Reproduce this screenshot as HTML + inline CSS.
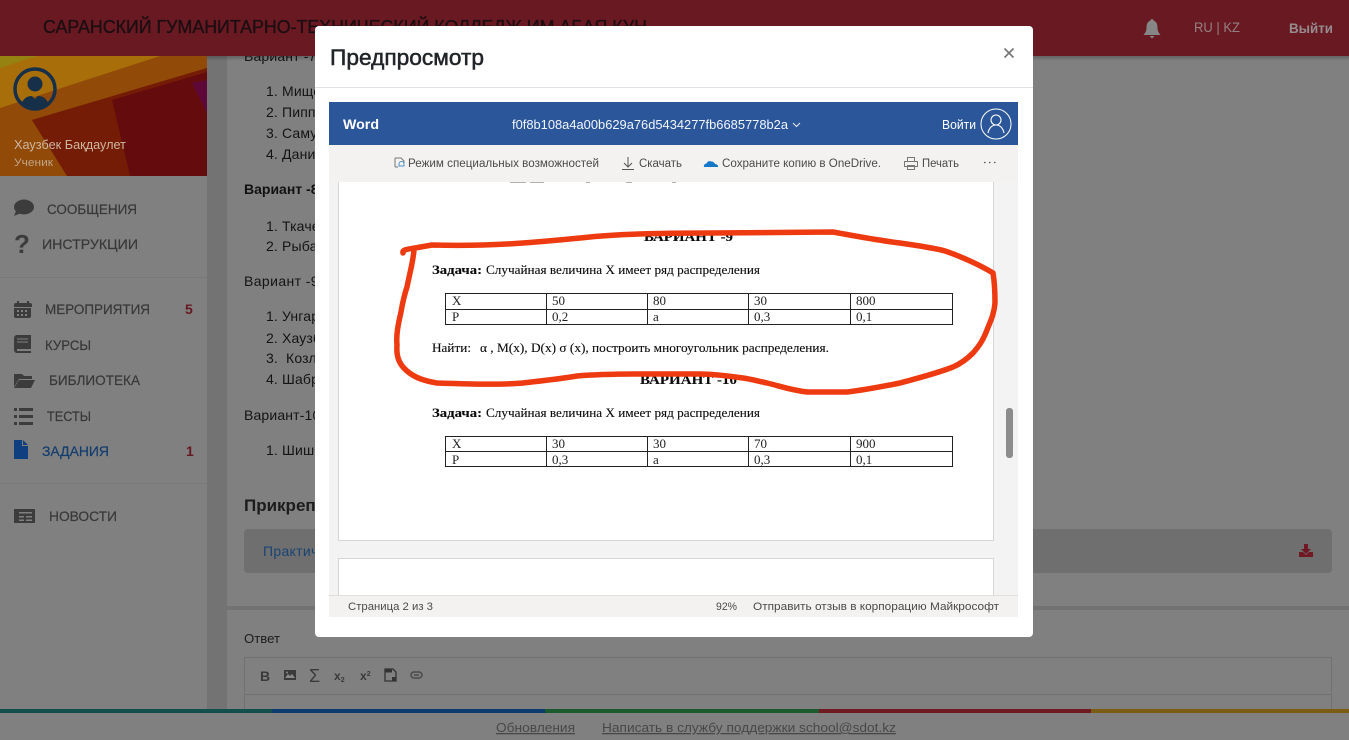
<!DOCTYPE html>
<html lang="ru"><head><meta charset="utf-8"><title>Предпросмотр</title>
<style>
html,body{margin:0;padding:0;width:1349px;height:740px;overflow:hidden;background:#808080}
svg{display:block}
text{font-family:"Liberation Sans","DejaVu Sans",sans-serif;white-space:pre}
.m{font-size:14px;fill:#383838;stroke:#383838;stroke-width:.2px}
.t{font-size:14px;fill:#141414;letter-spacing:.15px}
.w{font-size:11.500px;fill:#4a4a4a}
.d{font-family:"Liberation Serif",serif;font-size:13px;fill:#0c0c0c;stroke:#0c0c0c;stroke-width:.12px}
.c{font-family:"Liberation Serif",serif;font-size:13px;fill:#222}
.i{fill:#3c3c3c}
</style></head><body>
<svg width="1349" height="740" viewBox="0 0 1349 740" xmlns="http://www.w3.org/2000/svg">
<defs>
<linearGradient id="sh" x1="0" y1="0" x2="0" y2="1"><stop offset="0" stop-color="#000" stop-opacity=".22"/><stop offset="1" stop-color="#000" stop-opacity="0"/></linearGradient>
</defs>
<rect width="1349" height="740" fill="#808080"/>
<!-- main -->
<rect x="207" y="56" width="20" height="654" fill="#737373"/>
<rect x="227" y="606" width="1122" height="4" fill="#727272"/>
<g>
<text class="t" x="244" y="61">Вариант -7</text>
<text class="t" x="266" y="96">1. Мищенко</text>
<text class="t" x="266" y="117">2. Пиппин</text>
<text class="t" x="266" y="138">3. Самуэль</text>
<text class="t" x="266" y="159">4. Данилов</text>
<text class="t" x="244" y="194" style="font-weight:700;fill:#111;letter-spacing:0">Вариант -8</text>
<text class="t" x="266" y="231">1. Ткаченко</text>
<text class="t" x="266" y="251">2. Рыбаков</text>
<text class="t" x="244" y="286" style="letter-spacing:.4px">Вариант -9</text>
<text class="t" x="266" y="321">1. Унгаров</text>
<text class="t" x="266" y="343">2. Хаузбек</text>
<text class="t" x="266" y="363">3.  Козлов</text>
<text class="t" x="266" y="384">4. Шабров</text>
<text class="t" x="244" y="420">Вариант-10</text>
<text class="t" x="266" y="455">1. Шишкин</text>
<text x="244" y="511" style="fill:#1c1c1c;font-weight:700;font-size:17px">Прикрепленные</text>
<rect x="244" y="529" width="1088" height="44" rx="4" fill="#6f6f6f"/>
<text x="263" y="556" style="font-size:14px;fill:#1a4474;letter-spacing:.3px">Практическая</text>
<path d="M1304 544h4v5h3l-5 5-5-5h3z M1299 552h4l3 3 3-3h4v5h-14z" fill="#701824"/>
<text x="244" y="643" textLength="36" lengthAdjust="spacingAndGlyphs" style="font-size:13px;fill:#1c1c1c">Ответ</text>
<path d="M244.500 710V657.500H1331.500V710" fill="none" stroke="#717171"/>
<line x1="245" y1="694.500" x2="1331" y2="694.500" stroke="#717171"/>
<text x="260" y="681" style="font-size:14px;font-weight:700;fill:#3a3a3a">B</text>
<path d="M284 670h12v10h-12z" fill="#3a3a3a"/><path d="M285 678l3-4 2 2 2-2 3 4z" fill="#8a8a8a"/><circle cx="287" cy="672.500" r="1" fill="#8a8a8a"/>
<text x="309" y="682" style="font-size:18px;fill:#3a3a3a">Σ</text>
<text x="334" y="680" style="font-size:12px;font-weight:700;fill:#3a3a3a">x<tspan font-size="7" dy="2">2</tspan></text>
<text x="360" y="680" style="font-size:12px;font-weight:700;fill:#3a3a3a">x<tspan font-size="7" dy="-4">2</tspan></text>
<path d="M385 669h8l3 3v9h-11z" fill="none" stroke="#333" stroke-width="1.300"/><rect x="385" y="669" width="7" height="3.500" fill="#333"/><rect x="392" y="677" width="3.500" height="4" fill="#333"/>
<rect x="411" y="672" width="11" height="6" rx="3" fill="none" stroke="#4a4a4a" stroke-width="1.500"/><line x1="414" y1="675" x2="419" y2="675" stroke="#4a4a4a" stroke-width="1.500"/>
</g>
<!-- sidebar -->
<rect x="0" y="56" width="207" height="654" fill="#808080"/>
<rect x="0" y="56" width="207" height="120" fill="#7c3008"/>
<polygon points="0,56 207,56 207,68 32,120 67,176 0,176" fill="#924a08"/>
<polygon points="0,108 160,56 0,56" fill="#a86e0a"/>
<polygon points="0,68 37,56 0,56" fill="#968210"/>
<polygon points="32,120 207,68 207,176 67,176" fill="#741c06"/>
<polygon points="112,100 207,72 207,176 130,176" fill="#640c0d"/>
<polygon points="192,83 207,80 207,113" fill="#5e083a"/>
<circle cx="35" cy="89" r="20" fill="none" stroke="#16304a" stroke-width="3.500"/>
<circle cx="35" cy="84" r="7.500" fill="#16304a"/>
<path d="M22 103c2-6 7-7 10-7l3 3 3-3c3 0 8 1 10 7-3 4-8 6-13 6s-10-2-13-6z" fill="#16304a"/>
<text x="14" y="149" textLength="112" lengthAdjust="spacingAndGlyphs" style="font-size:13px;fill:#cdb6a0">Хаузбек Бақдаулет</text>
<text x="14" y="166" textLength="39" lengthAdjust="spacingAndGlyphs" style="font-size:11px;fill:#c0a488">Ученик</text>
<line x1="0" y1="277.500" x2="207" y2="277.500" stroke="#787878"/>
<line x1="0" y1="483.500" x2="207" y2="483.500" stroke="#787878"/>
<ellipse cx="24" cy="207" rx="10" ry="7.500" class="i"/><path d="M16 211l-2 5 7-3z" class="i"/>
<text x="14" y="253" style="font-size:26px;font-weight:700;fill:#3c3c3c">?</text>
<text class="m" x="47" y="214" textLength="90" lengthAdjust="spacingAndGlyphs">СООБЩЕНИЯ</text>
<text class="m" x="42" y="249" textLength="96" lengthAdjust="spacingAndGlyphs">ИНСТРУКЦИИ</text>
<text class="m" x="45" y="314" textLength="105" lengthAdjust="spacingAndGlyphs">МЕРОПРИЯТИЯ</text>
<text class="m" x="45" y="350" textLength="46" lengthAdjust="spacingAndGlyphs">КУРСЫ</text>
<text class="m" x="49" y="385" textLength="91" lengthAdjust="spacingAndGlyphs">БИБЛИОТЕКА</text>
<text class="m" x="47" y="421" textLength="44" lengthAdjust="spacingAndGlyphs">ТЕСТЫ</text>
<text class="m" x="42" y="456" textLength="67" lengthAdjust="spacingAndGlyphs" style="fill:#123c6e;stroke:#123c6e">ЗАДАНИЯ</text>
<text class="m" x="49" y="521" textLength="68" lengthAdjust="spacingAndGlyphs">НОВОСТИ</text>
<text x="185" y="314" style="font-size:14px;font-weight:700;fill:#661820">5</text>
<text x="186" y="456" style="font-size:14px;font-weight:700;fill:#661820">1</text>
<path d="M14 305a2 2 0 0 1 2-2h1v-2h2v2h8v-2h2v2h1a2 2 0 0 1 2 2v2H14zM14 308h17v8a2 2 0 0 1-2 2H16a2 2 0 0 1-2-2z" class="i"/>
<path d="M17 310h2v2h-2zM21 310h2v2h-2zM25 310h2v2h-2zM17 314h2v2h-2zM21 314h2v2h-2zM25 314h2v2h-2z" fill="#808080"/>
<path d="M17 335h14v18H17a3 3 0 0 1-3-3V338a3 3 0 0 1 3-3z" class="i"/><path d="M17 339h11M17 342h11" stroke="#808080" stroke-width="1"/><path d="M17 349h14v2H17z" fill="#808080"/>
<path d="M14 374h8l2 2h8v3H19l-5 8z" class="i"/><path d="M19 380h16l-4 8H14z" class="i"/>
<path d="M14 408h3v3h-3zM14 415h3v3h-3zM14 422h3v3h-3z" class="i"/><path d="M19 408h14v3H19zM19 415h14v3H19zM19 422h14v3H19z" class="i"/>
<path d="M14 440h8v6h6v13H14zM23 440l5 5h-5z" fill="#103f80"/>
<path d="M14 509h21v14H14z" class="i"/><path d="M19 512h13v1.500H19zM19 516h5v1.500h-5zM26 516h6v1.500h-6zM19 519.500h5v1.500h-5zM26 519.500h6v1.500h-6z" fill="#808080"/>
<!-- header -->
<rect x="207" y="56" width="1142" height="5" fill="url(#sh)"/>
<rect width="1349" height="56" fill="#681922"/>
<text x="43" y="33" textLength="604" lengthAdjust="spacingAndGlyphs" stroke="#1c0e11" stroke-width=".35" style="font-size:18px;fill:#1c0e11">САРАНСКИЙ ГУМАНИТАРНО-ТЕХНИЧЕСКИЙ КОЛЛЕДЖ ИМ.АБАЯ КУН</text>
<path d="M1152 19c1 0 1.500.7 1.500 1.500 3 1 4 4 4 7 0 4 1.500 5.500 3 7.500h-17c1.500-2 3-3.500 3-7.500 0-3 1-6 4-7 0-.8.500-1.500 1.500-1.500zM1149.500 36h5l-2.500 2.500z" fill="#868686"/>
<text x="1194" y="32" textLength="46" lengthAdjust="spacingAndGlyphs" style="font-size:14px;fill:#968082">RU | KZ</text>
<text x="1289" y="33" textLength="44" lengthAdjust="spacingAndGlyphs" style="font-size:14px;font-weight:700;fill:#968c8e">Выйти</text>
<!-- footer -->
<rect x="0" y="709" width="272" height="4" fill="#124f4d"/>
<rect x="272" y="709" width="273" height="4" fill="#0c3a6e"/>
<rect x="545" y="709" width="274" height="4" fill="#1a5a2c"/>
<rect x="819" y="709" width="272" height="4" fill="#701a22"/>
<rect x="1091" y="709" width="258" height="4" fill="#7a5c12"/>
<rect x="0" y="713" width="1349" height="27" fill="#808080"/>
<text x="496" y="732" textLength="79" lengthAdjust="spacingAndGlyphs" text-decoration="underline" style="font-size:13px;fill:#484848">Обновления</text>
<text x="602" y="732" textLength="294" lengthAdjust="spacingAndGlyphs" text-decoration="underline" style="font-size:13px;fill:#484848">Написать в службу поддержки school@sdot.kz</text>
<!-- modal -->
<rect x="315" y="26" width="718" height="611" rx="4" fill="#fff"/>
<line x1="315" y1="87.500" x2="1033" y2="87.500" stroke="#dee2e6"/>
<text x="330" y="65" textLength="154" lengthAdjust="spacingAndGlyphs" stroke="#212529" stroke-width=".5" style="font-size:22px;fill:#212529">Предпросмотр</text>
<path d="M1004.500 48.500l9 9m0-9l-9 9" stroke="#777" stroke-width="1.700" fill="none"/>
<!-- word frame -->
<rect x="329" y="182" width="689" height="413" fill="#f3f3f3"/>
<rect x="338.500" y="176" width="655" height="364.500" fill="#fff" stroke="#d6d6d6"/>
<rect x="338.500" y="558.500" width="655" height="38" fill="#fff" stroke="#d6d6d6"/>
<rect x="1006" y="408" width="7" height="50" rx="3" fill="#8c8c8c"/>
<rect x="329" y="102" width="689" height="43" fill="#2b579a"/>
<rect x="329" y="145" width="689" height="37" fill="#f3f2f1"/>
<path d="M510 182.500h16m4 0h14m42 0h4m36 0h6m40 0h4" stroke="#b0b0b0" stroke-width="1"/>
<text x="343" y="129" textLength="36" lengthAdjust="spacingAndGlyphs" style="font-size:14px;font-weight:700;fill:#fff">Word</text>
<text x="512" y="129" textLength="276" lengthAdjust="spacingAndGlyphs" style="font-size:12.500px;fill:#f2f5fa">f0f8b108a4a00b629a76d5434277fb6685778b2a</text>
<path d="M793 123l3.500 3.500 3.500-3.500" fill="none" stroke="#e6ecf5" stroke-width="1"/>
<text x="942" y="129" textLength="34" lengthAdjust="spacingAndGlyphs" style="font-size:12.500px;fill:#fff">Войти</text>
<circle cx="996" cy="124" r="15" fill="none" stroke="#fff" stroke-width="1"/>
<circle cx="996" cy="120" r="5" fill="none" stroke="#fff" stroke-width="1.100"/>
<path d="M988 133c1-5 4-8 8-8s7 3 8 8" fill="none" stroke="#fff" stroke-width="1.100"/>
<path d="M395 158h6l3 3v2m-9 4v-9m0 9h3" fill="none" stroke="#777" stroke-width="1"/><path d="M399 164a2.500 2.500 0 0 1 5 0v2h-5z" fill="none" stroke="#4d90c8" stroke-width="1"/>
<text class="w" x="408" y="167" textLength="191" lengthAdjust="spacingAndGlyphs">Режим специальных возможностей</text>
<path d="M628 157v10m-4-4l4 4 4-4M622 169.500h12" fill="none" stroke="#555" stroke-width="1"/>
<text class="w" x="639" y="167" textLength="43" lengthAdjust="spacingAndGlyphs">Скачать</text>
<path d="M704 167c-.5-2 1-3.500 2.500-3.500.7-2 3-3 5-2 1.500 0 3 1 3.500 2.500 2 0 3.500 1.500 3 3z" fill="#1478c8"/>
<text class="w" x="722" y="167" textLength="159" lengthAdjust="spacingAndGlyphs">Сохраните копию в OneDrive.</text>
<path d="M907.500 161.500v-4h7v4M904.500 161.500h13v5h-13zM907.500 165.500h7v4h-7z" fill="none" stroke="#777" stroke-width="1"/>
<text class="w" x="922" y="167" textLength="37" lengthAdjust="spacingAndGlyphs">Печать</text>
<path d="M984 162.500h1.500M989 162.500h1.500M994 162.500h1.500" stroke="#555" stroke-width="1.300"/>
<rect x="329" y="595" width="689" height="22" fill="#f3f2f1"/>
<line x1="329" y1="595.500" x2="1018" y2="595.500" stroke="#e1dfdd"/>
<text class="w" x="348" y="610" textLength="85" lengthAdjust="spacingAndGlyphs" style="font-size:11px">Страница 2 из 3</text>
<text class="w" x="716" y="610" textLength="21" lengthAdjust="spacingAndGlyphs" style="font-size:11px">92%</text>
<text class="w" x="753" y="610" textLength="246" lengthAdjust="spacingAndGlyphs" style="font-size:11px">Отправить отзыв в корпорацию Майкрософт</text>
<!-- doc -->
<text class="d" x="644" y="241" textLength="89" lengthAdjust="spacingAndGlyphs" style="font-weight:700">ВАРИАНТ -9</text>
<text class="d" x="432" y="274" textLength="50" lengthAdjust="spacingAndGlyphs" style="font-weight:700">Задача:</text>
<text class="d" x="486" y="274" textLength="274" lengthAdjust="spacingAndGlyphs">Случайная величина X имеет ряд распределения</text>
<path d="M445.500 293.500h507v31h-507zM445.500 309.500h507M546.500 293.500v31M647.500 293.500v31M748.500 293.500v31M850.500 293.500v31" fill="none" stroke="#222"/>
<text class="c" x="452" y="305">X</text><text class="c" x="552" y="305">50</text><text class="c" x="653" y="305">80</text><text class="c" x="754" y="305">30</text><text class="c" x="856" y="305">800</text>
<text class="c" x="452" y="321">P</text><text class="c" x="552" y="321">0,2</text><text class="c" x="653" y="321">a</text><text class="c" x="754" y="321">0,3</text><text class="c" x="856" y="321">0,1</text>
<text class="d" x="432" y="352" textLength="39" lengthAdjust="spacingAndGlyphs">Найти:</text>
<text class="d" x="480" y="352" textLength="349" lengthAdjust="spacingAndGlyphs">α , M(x), D(x) σ (x), построить многоугольник распределения.</text>
<text class="d" x="640" y="384" textLength="97" lengthAdjust="spacingAndGlyphs" style="font-weight:700">ВАРИАНТ -10</text>
<text class="d" x="432" y="417" textLength="50" lengthAdjust="spacingAndGlyphs" style="font-weight:700">Задача:</text>
<text class="d" x="486" y="417" textLength="274" lengthAdjust="spacingAndGlyphs">Случайная величина X имеет ряд распределения</text>
<path d="M445.500 436.500h507v30h-507zM445.500 451.500h507M546.500 436.500v30M647.500 436.500v30M748.500 436.500v30M850.500 436.500v30" fill="none" stroke="#222"/>
<text class="c" x="452" y="448">X</text><text class="c" x="552" y="448">30</text><text class="c" x="653" y="448">30</text><text class="c" x="754" y="448">70</text><text class="c" x="856" y="448">900</text>
<text class="c" x="452" y="464">P</text><text class="c" x="552" y="464">0,3</text><text class="c" x="653" y="464">a</text><text class="c" x="754" y="464">0,3</text><text class="c" x="856" y="464">0,1</text>
<path d="M403 253C402 249 410 249 415 248L432 245C465 246 495 245 523 243C550 241 570 239 590 237C610 235 640 233 710 233L833 232C850 235 875 240 900 243C920 246 935 248 945 251C960 256 980 265 993 273C995 285 995 295 995 303C994 315 990 322 987 330C983 340 980 345 973 353C966 360 960 364 953 367C935 374 918 378 900 383C880 387 865 390 847 392L807 392C790 390 780 386 767 383C758 381 750 379 743 378C728 376 715 374 700 374L640 374C620 374 600 374 577 376C560 379 540 381 523 383C500 385 470 384 437 383C425 381 415 378 407 371C400 365 396 358 397 345C396 335 398 325 401 312C403 300 405 293 407 287C410 272 413 262 414 250" fill="none" stroke="#ee3a10" stroke-width="5.500" stroke-linejoin="round" stroke-linecap="round"/>
</svg>
</body></html>
